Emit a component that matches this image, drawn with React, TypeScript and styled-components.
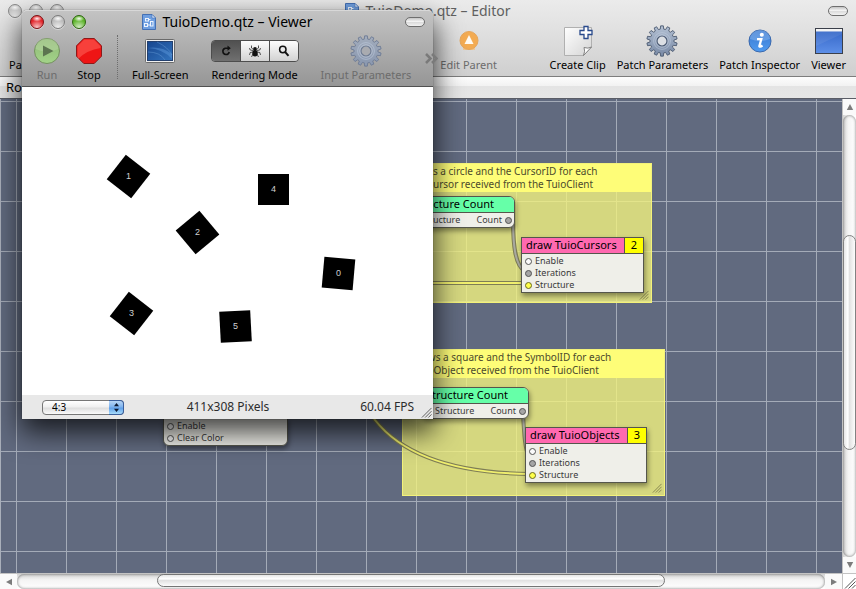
import React from "react";
import styled, { createGlobalStyle } from "styled-components";

const Global = createGlobalStyle`
  *, *::before, *::after { box-sizing: border-box; }
  html, body { margin: 0; padding: 0; }
  body {
    font-family: "Noto Sans", "Open Sans", sans-serif;
    font-size: 11px;
    color: #000;
    overflow: hidden;
  }
  button, select { font: inherit; color: inherit; margin: 0; padding: 0; border: 0; background: none; }
  svg { display: block; }
`;

/* ---------- shared window chrome ---------- */

const Desktop = styled.div`
  position: relative;
  height: 100vh;
  overflow: hidden;
`;

const TitleRow = styled.div<{ $inactive?: boolean }>`
  display: grid;
  grid-template-columns: 1fr auto 1fr;
  align-items: center;
  height: 22px;
  padding: 0 8px;
  color: ${(p) => (p.$inactive ? "#606060" : "#000")};
`;

const Lights = styled.div`
  display: flex;
  gap: 7px;
`;

const Light = styled.button<{ $tone: string; $edge: string }>`
  width: 14px;
  height: 14px;
  border-radius: 50%;
  border: 1px solid ${(p) => p.$edge};
  background:
    radial-gradient(ellipse 5px 3px at 50% 22%, rgba(255, 255, 255, 0.95), rgba(255, 255, 255, 0) 100%),
    radial-gradient(circle at 50% 95%, rgba(255, 255, 255, 0.75), rgba(255, 255, 255, 0) 60%),
    ${(p) => p.$tone};
  box-shadow: 0 1px 0 rgba(255, 255, 255, 0.4);
`;

const Title = styled.h1`
  display: flex;
  align-items: center;
  gap: 6px;
  margin: 0;
  font-size: 14px;
  line-height: 20px;
  font-weight: 400;
  white-space: nowrap;
`;

const Pill = styled.button`
  justify-self: end;
  width: 20px;
  height: 10px;
  border: 1px solid #6e6e6e;
  border-radius: 5px;
  background: linear-gradient(#c4c4c4, #f4f4f4 45%, #dcdcdc 55%, #f2f2f2);
`;

const Tool = styled.button<{ $dim?: boolean }>`
  display: flex;
  flex-direction: column;
  align-items: center;
  line-height: 15px;
  white-space: nowrap;
  color: ${(p) => (p.$dim ? "#6c6c6c" : "#000")};
`;

const ToolIcon = styled.span`
  display: flex;
  align-items: center;
  justify-content: center;
  height: 32px;
`;

/* ---------- editor window ---------- */

const Editor = styled.section`
  display: flex;
  flex-direction: column;
  height: 100%;
`;

const EditorHead = styled.header`
  background: linear-gradient(#ebebeb, #e2e2e2 35%, #cfcfcf);
  border-bottom: 1px solid #7d7d7d;
  height: 77px;
`;

const EditorTools = styled.div`
  display: flex;
  justify-content: space-between;
  padding: 3px 10px 0 9px;
`;

const ToolGroup = styled.div`
  display: flex;
  gap: 11px;
`;

const LeftTools = styled(ToolGroup)`
  width: 488px;
  justify-content: space-between;
`;

const PathBar = styled.nav`
  height: 22px;
  padding: 0 6px;
  font-size: 13px;
  line-height: 21px;
  background: linear-gradient(#fdfdfd 0, #f2f2f2 9px, #e4e4e4 9px, #e6e6e6 100%);
  border-bottom: 1px solid #5a5d66;
`;

const EditorBody = styled.div`
  flex: 1;
  min-height: 0;
  display: grid;
  grid-template-columns: 1fr 14px;
  grid-template-rows: 1fr 16px;
`;

const Canvas = styled.div`
  position: relative;
  overflow: hidden;
  border-left: 1px solid #a9afba;
  background-color: #616a7f;
  background-image:
    linear-gradient(90deg, #a4abb8 1px, transparent 1px),
    linear-gradient(#a4abb8 1px, transparent 1px);
  background-size: 50px 50px;
  background-position: 15px 2px;
`;

const Wires = styled.svg`
  position: absolute;
  left: -1px;
  top: -99px;
  width: 842px;
  height: 573px;
  fill: none;
`;

const Note = styled.section<{ $x: number; $y: number; $w: number; $h: number }>`
  position: absolute;
  left: ${(p) => p.$x - 1}px;
  top: ${(p) => p.$y - 99}px;
  width: ${(p) => p.$w}px;
  height: ${(p) => p.$h}px;
  border: 1px solid #f3f27a;
  background: rgba(243, 242, 128, 0.8);
`;

const NoteText = styled.p`
  margin: 0;
  height: 28px;
  padding: 1px 0 0 8px;
  font-size: 10px;
  line-height: 13px;
  white-space: pre;
  color: #4c4b2c;
  background: #fefd78;
`;

const NoteGrip = styled.span`
  position: absolute;
  right: 2px;
  bottom: 2px;
`;

const NodeBox = styled.article<{ $x: number; $y: number; $w: number; $radius?: string }>`
  position: absolute;
  left: ${(p) => p.$x - 1}px;
  top: ${(p) => p.$y - 99}px;
  width: ${(p) => p.$w}px;
  border: 1px solid #55564c;
  border-radius: ${(p) => p.$radius ?? "0"};
  overflow: hidden;
  background: #efefe9;
  box-shadow: 1px 3px 5px rgba(0, 0, 0, 0.4);
`;

const NodeHead = styled.header<{ $fill: string }>`
  display: flex;
  height: 16px;
  border-bottom: 1px solid #55564c;
  background: ${(p) => p.$fill};
  font-size: 11px;
  line-height: 14px;
  white-space: nowrap;
`;

const NodeName = styled.span`
  flex: 1;
  padding-left: 4px;
`;

const NodeCount = styled.span`
  width: 19px;
  border-left: 1px solid #55564c;
  background: #ffff00;
  text-align: center;
`;

const Ports = styled.div<{ $row?: boolean }>`
  display: flex;
  flex-direction: ${(p) => (p.$row ? "row" : "column")};
  justify-content: space-between;
  padding: ${(p) => (p.$row ? "1px 2px 1px 3px" : "1px 3px")};
`;

const PortRow = styled.span`
  display: flex;
  align-items: center;
  gap: 3px;
  height: 12px;
  font-size: 9px;
  line-height: 12px;
  color: #3a3a3a;
`;

const Dot = styled.i<{ $fill: string; $edge?: string }>`
  width: 7px;
  height: 7px;
  border-radius: 50%;
  border: 1px solid ${(p) => p.$edge ?? "#555"};
  background: ${(p) => p.$fill};
`;

/* ---------- scroll bars ---------- */

const VBar = styled.div`
  display: flex;
  flex-direction: column;
  background: linear-gradient(90deg, #d2d2d2, #f4f4f4 40%, #fff);
  border-left: 1px solid #c3c3c3;
`;

const HBar = styled.div`
  display: flex;
  background: linear-gradient(#d2d2d2, #f4f4f4 40%, #fff);
  border-top: 1px solid #c3c3c3;
`;

const Arrow = styled.button`
  flex: none;
  display: flex;
  align-items: center;
  justify-content: center;
  width: 17px;
  height: 15px;
  background: #fafafa;
`;

const VArrow = styled(Arrow)`
  width: 100%;
  height: 16px;
`;

const VTrack = styled.div`
  flex: 1;
  display: flex;
  flex-direction: column;
  border-radius: 7px;
  box-shadow: inset 0 0 3px rgba(0, 0, 0, 0.55);
`;

const HTrack = styled.div`
  flex: 1;
  display: flex;
  border-radius: 7px;
  box-shadow: inset 0 0 3px rgba(0, 0, 0, 0.55);
`;

const Gap = styled.span<{ $grow: number }>`
  flex: ${(p) => p.$grow} 0 0;
`;

const VThumb = styled.button<{ $grow: number }>`
  flex: ${(p) => p.$grow} 0 0;
  border: 1px solid #828282;
  border-radius: 7px;
  background: linear-gradient(90deg, #e6e6e6, #fff 35%, #e2e2e2 50%, #fcfcfc);
`;

const HThumb = styled.button<{ $grow: number }>`
  flex: ${(p) => p.$grow} 0 0;
  height: 13px;
  border: 1px solid #757575;
  border-radius: 7px;
  background: linear-gradient(#e6e6e6, #fff 35%, #e2e2e2 50%, #fcfcfc);
`;

const Corner = styled.div`
  display: flex;
  align-items: flex-end;
  justify-content: flex-end;
  background: #fff;
  border-top: 1px solid #c3c3c3;
  border-left: 1px solid #c3c3c3;
`;

/* ---------- viewer window ---------- */

const Viewer = styled.section`
  position: absolute;
  left: 22px;
  top: 10px;
  width: 411px;
  box-shadow: 0 0 1px rgba(0, 0, 0, 0.7), 0 12px 28px 1px rgba(0, 0, 0, 0.75);
  border-radius: 5px 5px 0 0;
`;

const ViewerHead = styled.header`
  height: 77px;
  border-radius: 5px 5px 0 0;
  border-top: 1px solid #d8d8d8;
  border-bottom: 1px solid #515151;
  background: linear-gradient(#c3c3c3, #969696);
`;

const ViewerTools = styled.div`
  display: flex;
  align-items: flex-start;
  gap: 14px;
  padding: 2px 4px 0 11px;
`;

const PlayTools = styled.div`
  display: flex;
  gap: 14px;
`;

const ViewTools = styled.div`
  display: flex;
  gap: 22px;
`;

const Divider = styled.span`
  height: 44px;
  border-left: 1px dotted #6d6d6d;
`;

const ToolField = styled.div`
  display: flex;
  flex-direction: column;
  align-items: center;
  line-height: 15px;
  white-space: nowrap;
`;

const Segments = styled.div`
  display: flex;
  width: 88px;
  height: 22px;
  border: 1px solid #4d4d4d;
  border-radius: 4px;
  overflow: hidden;
`;

const Segment = styled.button<{ $on?: boolean }>`
  flex: 1;
  display: flex;
  align-items: center;
  justify-content: center;
  background: ${(p) => (p.$on ? "linear-gradient(#505050, #707070)" : "linear-gradient(#fdfdfd, #d2d2d2)")};
  & + & { border-left: 1px solid #4d4d4d; }
`;

const More = styled.button`
  align-self: center;
  margin-left: auto;
`;

const Scene = styled.div`
  position: relative;
  height: 308px;
  background: #fff;
`;

const Marker = styled.span<{ $x: number; $y: number; $turn: number }>`
  position: absolute;
  left: ${(p) => p.$x - 15}px;
  top: ${(p) => p.$y - 15}px;
  width: 31px;
  height: 31px;
  display: grid;
  place-items: center;
  font: 9px/11px "Liberation Sans", Arial, sans-serif;
  color: #d0d0d0;
  isolation: isolate;
  &::before {
    content: "";
    position: absolute;
    inset: 0;
    z-index: -1;
    background: #000;
    transform: rotate(${(p) => p.$turn}deg);
  }
`;

const ViewerFoot = styled.footer`
  position: relative;
  display: grid;
  grid-template-columns: 1fr auto 1fr;
  align-items: center;
  height: 24px;
  padding: 0 19px 0 20px;
  background: #e8e8e8;
  font-size: 12px;
  line-height: 16px;
  color: #2c2c2c;
`;

const Ratio = styled.label`
  position: relative;
  display: block;
  width: 82px;
`;

const RatioSelect = styled.select`
  display: block;
  appearance: none;
  width: 100%;
  height: 15px;
  padding: 0 20px 0 9px;
  border: 1px solid #767676;
  border-radius: 4px;
  background: linear-gradient(#fff, #f0f0f0 45%, #dedede 55%, #fafafa);
  font-size: 10px;
  line-height: 13px;
  color: #000;
`;

const Stepper = styled.span`
  position: absolute;
  right: 0;
  top: 0;
  width: 15px;
  height: 15px;
  display: grid;
  place-items: center;
  border: 1px solid #3b5f9c;
  border-left: 0;
  border-radius: 0 4px 4px 0;
  background: linear-gradient(#b8d6f6, #7fb3ee 45%, #5fa0ea 55%, #a8dcfa);
  pointer-events: none;
`;

const Fps = styled.output`
  justify-self: end;
`;

const FootGrip = styled.span`
  position: absolute;
  right: 1px;
  bottom: 1px;
`;

/* ---------- icons ---------- */

function gearPath(teeth: number, outer: number, inner: number) {
  const pts: string[] = [];
  const step = (Math.PI * 2) / teeth;
  for (let i = 0; i < teeth; i++) {
    const a = i * step - Math.PI / 2;
    const put = (r: number, k: number) =>
      pts.push(`${(16 + r * Math.cos(a + k * step)).toFixed(2)} ${(16 + r * Math.sin(a + k * step)).toFixed(2)}`);
    put(inner, -0.32);
    put(outer, -0.2);
    put(outer, 0.2);
    put(inner, 0.32);
  }
  return `M${pts.join("L")}Z`;
}

const Gear = ({ id, faded }: { id: string; faded?: boolean }) => (
  <svg width="32" height="32" viewBox="0 0 32 32">
    <defs>
      <linearGradient id={id} x1="0" y1="0" x2="0" y2="1">
        <stop offset="0" stopColor={faded ? "#a3adbd" : "#b3c0d3"} />
        <stop offset="1" stopColor={faded ? "#8997af" : "#7889a5"} />
      </linearGradient>
    </defs>
    <path d={gearPath(14, 15.2, 12)} fill={`url(#${id})`} stroke={faded ? "#6d7b94" : "#4c5a70"} strokeWidth=".9" strokeLinejoin="round" />
    <circle cx="16" cy="16" r="8.4" fill="none" stroke="#c5d2e4" strokeWidth="1" opacity=".5" />
    <circle cx="16" cy="16" r="5" fill={faded ? "#a9abb0" : "#dcdfe4"} stroke={faded ? "#6f7c93" : "#4c5b74"} strokeWidth="1.2" />
    <circle cx="16" cy="16" r="6.2" fill="none" stroke="#dbe4f1" strokeWidth=".8" opacity=".6" />
  </svg>
);

const DocIcon = () => (
  <svg width="14" height="16" viewBox="0 0 14 16">
    <path d="M.5.5H10L13.5 4V15.500H.5Z" fill="#6f9fe0" stroke="#4470b4" />
    <path d="M10 .5V4h3.500Z" fill="#dbe8fa" stroke="#4470b4" strokeWidth=".6" />
    <g fill="none" stroke="#eef5ff" strokeWidth="1">
      <rect x="3.500" y="4.500" width="3" height="2.500" />
      <rect x="2.500" y="9.500" width="3" height="3" />
      <rect x="8.500" y="7.500" width="2.500" height="4.500" />
      <path d="M6.500 5.500H8.500M5.500 11H8.500" />
    </g>
  </svg>
);

const RunIcon = () => (
  <svg width="28" height="28" viewBox="0 0 28 28">
    <defs>
      <linearGradient id="run" x1="0" y1="0" x2="0" y2="1">
        <stop offset="0" stopColor="#8fb876" />
        <stop offset="1" stopColor="#a3d489" />
      </linearGradient>
    </defs>
    <circle cx="14" cy="14" r="12.500" fill="url(#run)" stroke="#74915f" />
    <path d="M2.500 12a11.500 10.500 0 0 1 23 0q-12 5-23 0Z" fill="#c2dbb0" opacity=".4" />
    <path d="M10 8.500L20.500 14L10 19.500Z" fill="#5c7450" />
  </svg>
);

const StopIcon = () => (
  <svg width="28" height="28" viewBox="0 0 28 28">
    <path d="M8.800 1.500H19.200L26.500 8.800V19.200L19.200 26.500H8.800L1.500 19.200V8.800Z" fill="#ee1515" stroke="#8c1a1a" />
    <path d="M9.200 2.500H18.800L25.500 9.200V11Q12 13 3 22L2.500 18.800V9.200Z" fill="#ff6b61" opacity=".5" />
  </svg>
);

const ScreenIcon = () => (
  <svg width="30" height="24" viewBox="0 0 30 24">
    <defs>
      <linearGradient id="screen" x1="0" y1="0" x2="1" y2="1">
        <stop offset="0" stopColor="#17468f" />
        <stop offset="1" stopColor="#3273bd" />
      </linearGradient>
    </defs>
    <rect x=".5" y=".5" width="29" height="23" rx="1" fill="#f1f1f1" stroke="#6a6a6a" />
    <rect x="2.500" y="2.500" width="25" height="19" fill="url(#screen)" stroke="#24406e" />
    <path d="M3 9Q18 10 27 20V15Q16 7 3 9Z" fill="#5f9bdd" opacity=".45" />
    <path d="M3 13Q15 13 20 21M12 3Q23 8 27 16" fill="none" stroke="#7cb0e6" strokeWidth=".7" opacity=".5" />
  </svg>
);

const ReloadGlyph = () => (
  <svg width="12" height="12" viewBox="0 0 12 12">
    <path d="M8.500 3.200H5.200A3.200 3.200 0 1 0 9.200 7" fill="none" stroke="#111" strokeWidth="1.600" />
    <path d="M7.500.6L10.800 3.300L7.500 5.800Z" fill="#111" />
  </svg>
);

const BugGlyph = () => (
  <svg width="14" height="14" viewBox="0 0 14 14">
    <ellipse cx="7" cy="9.300" rx="2.700" ry="3.300" fill="#111" />
    <circle cx="7" cy="5" r="1.900" fill="#111" />
    <path d="M5.500 5.500L3.500 4V1.500M8.500 5.500L10.500 4V1.500M5 6.500L2.200 6L1.500 4M9 6.500L11.800 6L12.500 4M5 8L2.200 8.500L1.500 11M9 8L11.800 8.500L12.500 11M5 10L3.500 13M9 10L10.500 13" fill="none" stroke="#111" strokeWidth=".7" />
  </svg>
);

const LensGlyph = () => (
  <svg width="12" height="12" viewBox="0 0 12 12">
    <circle cx="4.800" cy="4.500" r="3.200" fill="none" stroke="#111" strokeWidth="1.500" />
    <path d="M7 6.800L10.500 10.800" stroke="#111" strokeWidth="2" />
  </svg>
);

const ParentIcon = () => (
  <svg width="20" height="22" viewBox="0 0 20 22">
    <path d="M4 16h12v4H4Z" fill="#eec795" />
    <circle cx="10" cy="10.500" r="9" fill="#f3ab52" stroke="#e5a55a" />
    <path d="M10 5L14.500 14H5.500Z" fill="#fffaf2" />
  </svg>
);

const ClipIcon = () => (
  <svg width="30" height="32" viewBox="0 0 30 32">
    <defs>
      <linearGradient id="clip" x1="0" y1="0" x2="1" y2="1">
        <stop offset="0" stopColor="#fff" />
        <stop offset="1" stopColor="#d4d4d4" />
      </linearGradient>
    </defs>
    <path d="M1.500 2.500H28.500V22L20.500 30.500H1.500Z" fill="url(#clip)" stroke="#b0b0b0" />
    <path d="M20.500 30.500Q22.500 26 21 22.500Q25 24 28.500 22Z" fill="#fff" stroke="#777" strokeWidth=".9" />
    <path d="M21 1.500H25V5.500H29V9.500H25V13.500H21V9.500H17V5.500H21Z" fill="#fff" stroke="#294a8c" strokeWidth="1.300" />
  </svg>
);

const InfoIcon = () => (
  <svg width="24" height="24" viewBox="0 0 24 24">
    <defs>
      <linearGradient id="info" x1="0" y1="0" x2="0" y2="1">
        <stop offset="0" stopColor="#3a76cc" />
        <stop offset="1" stopColor="#4f9bf0" />
      </linearGradient>
    </defs>
    <circle cx="12" cy="12" r="11" fill="url(#info)" stroke="#3b69ad" />
    <path d="M2 10a10 9 0 0 1 20 0q-10 4-20 0Z" fill="#9cc3f2" opacity=".4" />
    <circle cx="13.800" cy="5.800" r="2" fill="#fff" />
    <path d="M9 10.200H13.300L11.300 17.200Q11.500 18.500 14.500 16.500" fill="none" stroke="#fff" strokeWidth="2.300" />
  </svg>
);

const ViewerIcon = () => (
  <svg width="28" height="26" viewBox="0 0 28 26">
    <defs>
      <linearGradient id="view" x1="0" y1="0" x2="0" y2="1">
        <stop offset="0" stopColor="#3263c4" />
        <stop offset="1" stopColor="#5d8fe8" />
      </linearGradient>
    </defs>
    <rect x=".5" y=".5" width="27" height="25" fill="url(#view)" stroke="#3a3f4a" />
    <rect x="1" y="1" width="26" height="2.500" fill="#f4f4f4" />
    <path d="M1 18Q14 12 27 6V3.500H1Z" fill="#fff" opacity=".07" />
  </svg>
);

const Grip = ({ size, dark }: { size: number; dark?: boolean }) => (
  <svg width={size} height={size} viewBox="0 0 12 12" fill="none" stroke={dark ? "#555" : "#7b7a4a"} strokeWidth="1">
    <path d="M1 11.500L11.500 1M4.500 11.500L11.500 4.500M8 11.500L11.500 8" />
  </svg>
);

const arrows: Record<string, string> = {
  up: "M4 1L7.200 7H.8Z",
  down: "M4 7L7.200 1H.8Z",
  left: "M1 4L7 .8V7.200Z",
  right: "M7 4L1 .8V7.200Z",
};

const ArrowGlyph = ({ dir }: { dir: string }) => (
  <svg width="8" height="8" viewBox="0 0 8 8">
    <path d={arrows[dir]} fill="#7c7c7c" />
  </svg>
);

/* ---------- composed parts ---------- */

const WindowLights = ({ active }: { active?: boolean }) => (
  <Lights>
    <Light aria-label="Close" $tone={active ? "#e2262b" : "#c9c9c9"} $edge={active ? "#7c1416" : "#8b8b8b"} />
    <Light aria-label="Minimize" $tone={active ? "#bcbcbc" : "#c9c9c9"} $edge={active ? "#7c7c7c" : "#8b8b8b"} />
    <Light aria-label="Zoom" $tone={active ? "#5fb52c" : "#c9c9c9"} $edge={active ? "#2f6414" : "#8b8b8b"} />
  </Lights>
);

type Port = { label: string; fill: string; edge?: string };

const drawPorts: Port[] = [
  { label: "Enable", fill: "#fafafa" },
  { label: "Iterations", fill: "#a5a5a5" },
  { label: "Structure", fill: "#ffff4a", edge: "#6b6a20" },
];

const PortList = ({ ports }: { ports: Port[] }) => (
  <Ports>
    {ports.map((p) => (
      <PortRow key={p.label}>
        <Dot $fill={p.fill} $edge={p.edge} />
        {p.label}
      </PortRow>
    ))}
  </Ports>
);

const DrawNode = ({ x, y, w, name, count }: { x: number; y: number; w: number; name: string; count: number }) => (
  <NodeBox $x={x} $y={y} $w={w}>
    <NodeHead $fill="#ff69b0">
      <NodeName>{name}</NodeName>
      <NodeCount>{count}</NodeCount>
    </NodeHead>
    <PortList ports={drawPorts} />
  </NodeBox>
);

const CountNode = ({ x, y }: { x: number; y: number }) => (
  <NodeBox $x={x} $y={y} $w={108} $radius="6px">
    <NodeHead $fill="#66ffa8">
      <NodeName>Structure Count</NodeName>
    </NodeHead>
    <Ports $row>
      <PortRow>
        <Dot $fill="#ffff4a" />
        Structure
      </PortRow>
      <PortRow>
        Count
        <Dot $fill="#a5a5a5" />
      </PortRow>
    </Ports>
  </NodeBox>
);

const Wire = ({ d, core }: { d: string; core: string }) => (
  <>
    <path d={d} stroke="#7e7d56" strokeWidth="4" />
    <path d={d} stroke={core} strokeWidth="2" />
  </>
);

const markers = [
  { id: 1, x: 106, y: 89, turn: 38 },
  { id: 2, x: 175, y: 145, turn: 50 },
  { id: 3, x: 109, y: 226, turn: 38 },
  { id: 4, x: 251, y: 102, turn: 0 },
  { id: 5, x: 213, y: 239, turn: -3 },
  { id: 0, x: 316, y: 186, turn: 5 },
];

const EditorWindow = () => (
  <Editor>
    <EditorHead>
      <TitleRow $inactive>
        <WindowLights />
        <Title>
          <DocIcon />
          TuioDemo.qtz – Editor
        </Title>
        <Pill aria-label="Toggle toolbar" />
      </TitleRow>
      <EditorTools>
        <LeftTools>
          <Tool>
            <ToolIcon />
            Pa
          </Tool>
          <Tool $dim>
            <ToolIcon><ParentIcon /></ToolIcon>
            Edit Parent
          </Tool>
        </LeftTools>
        <ToolGroup>
          <Tool>
            <ToolIcon><ClipIcon /></ToolIcon>
            Create Clip
          </Tool>
          <Tool>
            <ToolIcon><Gear id="gearEditor" /></ToolIcon>
            Patch Parameters
          </Tool>
          <Tool>
            <ToolIcon><InfoIcon /></ToolIcon>
            Patch Inspector
          </Tool>
          <Tool>
            <ToolIcon><ViewerIcon /></ToolIcon>
            Viewer
          </Tool>
        </ToolGroup>
      </EditorTools>
    </EditorHead>
    <PathBar>Ro</PathBar>
    <EditorBody>
      <Canvas>
        <Note $x={390} $y={163} $w={262} $h={140}>
          <NoteText>{"Renders a circle and the CursorID for each\n   TuioCursor received from the TuioClient"}</NoteText>
          <NoteGrip><Grip size={10} /></NoteGrip>
        </Note>
        <Note $x={402} $y={349} $w={263} $h={147}>
          <NoteText>{"Draws a square and the SymbolID for each\n TuioObject received from the TuioClient"}</NoteText>
          <NoteGrip><Grip size={10} /></NoteGrip>
        </Note>
        <Wires>
          <Wire d="M513 219C513 245 515 266 525 271" core="#a8a8a0" />
          <Wire d="M400 283H526" core="#f0ef6e" />
          <Wire d="M523 412C524 435 525 450 530 461" core="#a8a8a0" />
          <Wire d="M365 405L375 420C397 448 440 473 530 474" core="#f0ef6e" />
        </Wires>
        <CountNode x={407} y={196} />
        <DrawNode x={521} y={237} w={123} name="draw TuioCursors" count={2} />
        <CountNode x={421} y={387} />
        <DrawNode x={525} y={427} w={122} name="draw TuioObjects" count={3} />
        <NodeBox $x={163} $y={418} $w={125} $radius="0 0 6px 6px">
          <PortList ports={[{ label: "Enable", fill: "#fafafa" }, { label: "Clear Color", fill: "#fafafa" }]} />
        </NodeBox>
      </Canvas>
      <VBar>
        <VArrow aria-label="Scroll up"><ArrowGlyph dir="up" /></VArrow>
        <VTrack>
          <Gap $grow={121} />
          <VThumb $grow={214} aria-label="Vertical scroll" />
          <Gap $grow={108} />
        </VTrack>
        <VArrow aria-label="Scroll down"><ArrowGlyph dir="down" /></VArrow>
      </VBar>
      <HBar>
        <Arrow aria-label="Scroll left"><ArrowGlyph dir="left" /></Arrow>
        <HTrack>
          <Gap $grow={140} />
          <HThumb $grow={508} aria-label="Horizontal scroll" />
          <Gap $grow={160} />
        </HTrack>
        <Arrow aria-label="Scroll right"><ArrowGlyph dir="right" /></Arrow>
      </HBar>
      <Corner><Grip size={12} dark /></Corner>
    </EditorBody>
  </Editor>
);

const ViewerWindow = () => (
  <Viewer>
    <ViewerHead>
      <TitleRow>
        <WindowLights active />
        <Title>
          <DocIcon />
          TuioDemo.qtz – Viewer
        </Title>
        <Pill aria-label="Toggle toolbar" />
      </TitleRow>
      <ViewerTools>
        <PlayTools>
          <Tool $dim>
            <ToolIcon><RunIcon /></ToolIcon>
            Run
          </Tool>
          <Tool>
            <ToolIcon><StopIcon /></ToolIcon>
            Stop
          </Tool>
          <Divider />
        </PlayTools>
        <ViewTools>
          <Tool>
            <ToolIcon><ScreenIcon /></ToolIcon>
            Full-Screen
          </Tool>
          <ToolField role="group" aria-label="Rendering Mode">
            <ToolIcon>
              <Segments>
                <Segment $on aria-label="Normal"><ReloadGlyph /></Segment>
                <Segment aria-label="Debug"><BugGlyph /></Segment>
                <Segment aria-label="Profile"><LensGlyph /></Segment>
              </Segments>
            </ToolIcon>
            Rendering Mode
          </ToolField>
          <Tool $dim>
            <ToolIcon><Gear id="gearViewer" faded /></ToolIcon>
            Input Parameters
          </Tool>
        </ViewTools>
        <More aria-label="More tools">
          <svg width="13" height="11" viewBox="0 0 13 11" fill="none" stroke="#7a7a7a" strokeWidth="2.500">
            <path d="M1 1L5.500 5.500L1 10M7 1L11.500 5.500L7 10" />
          </svg>
        </More>
      </ViewerTools>
    </ViewerHead>
    <Scene>
      {markers.map((m) => (
        <Marker key={m.id} $x={m.x} $y={m.y} $turn={m.turn}>{m.id}</Marker>
      ))}
    </Scene>
    <ViewerFoot>
      <Ratio>
        <RatioSelect aria-label="Aspect ratio" defaultValue="4:3">
          <option>4:3</option>
        </RatioSelect>
        <Stepper>
          <svg width="7" height="9" viewBox="0 0 7 9">
            <path d="M3.500 0L6 3.300H1ZM3.500 9L6 5.700H1Z" fill="#0d1a33" />
          </svg>
        </Stepper>
      </Ratio>
      <span>411x308 Pixels</span>
      <Fps>60.04 FPS</Fps>
      <FootGrip><Grip size={11} dark /></FootGrip>
    </ViewerFoot>
  </Viewer>
);

export default function App() {
  return (
    <>
      <Global />
      <Desktop>
        <EditorWindow />
        <ViewerWindow />
      </Desktop>
    </>
  );
}
